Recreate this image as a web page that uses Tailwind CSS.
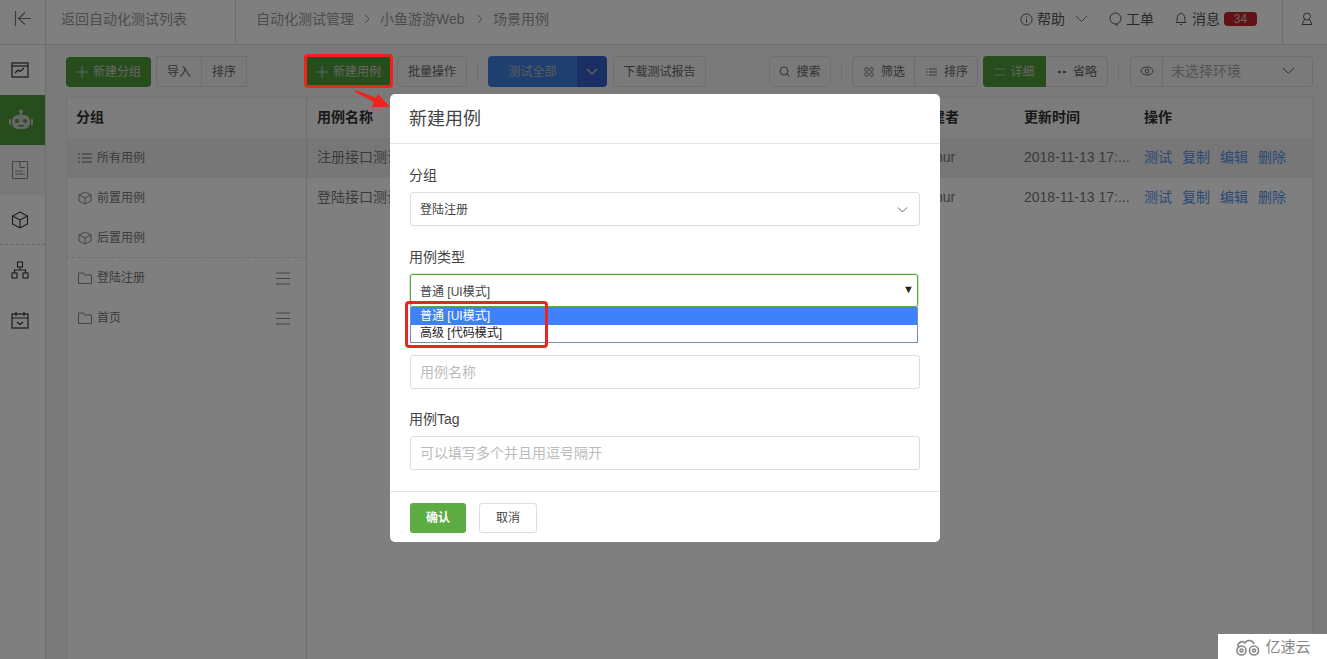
<!DOCTYPE html>
<html lang="zh-CN">
  <head>
    <meta charset="UTF-8" />
    <meta name="viewport" content="width=device-width, initial-scale=1.0" />
    <title>新建用例</title>
    <script src="https://cdn.jsdelivr.net/npm/@tailwindcss/browser@4"></script>
  </head>
  <body>
    <div class="relative flex h-screen flex-col overflow-hidden bg-white text-[#444] [font-family:'Liberation_Sans','Noto_Sans_CJK_SC',sans-serif]">
      <!-- top bar -->
      <header class="flex h-[45px] shrink-0 items-center border-b border-[#ddd] text-sm">
        <div class="flex h-full w-[46px] items-center justify-center border-r border-[#ddd] pb-[6px]">
          <svg class="h-5 w-5" viewBox="0 0 20 20" fill="none" stroke="#777" stroke-width="1.2"><path d="M2.500 2v15M18 9.500H6M12 3.500 5.500 9.500 12 15.500" /></svg>
        </div>
        <div class="flex h-full w-[190px] items-center border-r border-[#ddd] pb-[6px] pl-[15px] text-[#999]">返回自动化测试列表</div>
        <div class="flex h-full items-center pb-[6px] pl-5 text-[#999]">
          <span>自动化测试管理</span>
          <svg class="mx-[10px] h-[10px] w-[6px]" viewBox="0 0 6 10" fill="none" stroke="#999"><path d="M1 1l4 4-4 4" /></svg>
          <span class="w-[87px]">小鱼游游Web</span>
          <svg class="mx-[10px] h-[10px] w-[6px]" viewBox="0 0 6 10" fill="none" stroke="#999"><path d="M1 1l4 4-4 4" /></svg>
          <span>场景用例</span>
        </div>
        <div class="ml-auto flex h-full items-center pb-[6px] text-[#555]">
          <svg class="h-[13px] w-[13px]" viewBox="0 0 14 14" fill="none" stroke="#555"><circle cx="7" cy="7" r="6" /><path d="M7 6v4.500M7 3.500v1.200" /></svg>
          <span class="ml-[4px]">帮助</span>
          <svg class="ml-[10px] h-2 w-[13px]" viewBox="0 0 13 8" fill="none" stroke="#777"><path d="M1 1l5.500 5.500L12 1" /></svg>
          <svg class="ml-[21px] h-[14px] w-[13px]" viewBox="0 0 13 14" fill="none" stroke="#555"><circle cx="6.500" cy="6.500" r="5.500" /><path d="M6 12l3 1.500" /></svg>
          <span class="ml-[4px]">工单</span>
          <svg class="ml-[21px] h-[14px] w-3" viewBox="0 0 12 14" fill="none" stroke="#555"><path d="M1 10.500c1.200-1 1.200-2.500 1.200-4.500S3.500 1.500 6 1.500 9.800 4 9.800 6s0 3.500 1.200 4.500zM5 12.500h2" /></svg>
          <span class="ml-[5px]">消息</span>
          <span class="ml-[4px] flex h-[14px] w-[33px] items-center justify-center rounded-sm bg-[#c4242a] text-xs text-[#ccc]">34</span>
          <div class="-mb-[6px] ml-[25px] flex h-[45px] w-[45px] items-center justify-center border-l border-[#ddd] pb-[6px]">
            <svg class="ml-1 h-[14px] w-3" viewBox="0 0 12 14" fill="none" stroke="#555"><circle cx="6" cy="4.500" r="3.500" /><path d="M3.500 7.500 1 12.500h10L8.500 7.500" /></svg>
          </div>
        </div>
      </header>

      <div class="flex min-h-0 flex-1">
        <!-- sidebar -->
        <nav class="flex w-[46px] shrink-0 flex-col border-r border-[#ddd]">
          <div class="flex h-[50px] items-center justify-center pr-[6px]">
            <svg class="h-[18px] w-[18px]" viewBox="0 0 18 18" fill="none" stroke="#333" stroke-width="1.200"><rect x="1" y="2" width="16" height="14" /><path d="M1 5h16" /><path d="M4 12l3-3 2 1.500L13 7" /></svg>
          </div>
          <div class="flex h-[50px] items-center justify-center bg-[#4f9a38] pr-[4px]">
            <svg class="h-6 w-6" viewBox="0 0 24 24" fill="#ccc"><circle cx="12" cy="3.500" r="2" /><rect x="11" y="4" width="2" height="4" /><rect x="3" y="7" width="18" height="14" rx="6" /><rect x="0" y="11" width="2" height="6" rx="1" /><rect x="22" y="11" width="2" height="6" rx="1" /><circle cx="8" cy="13" r="2" fill="#4f9a38" /><circle cx="16" cy="13" r="2" fill="#4f9a38" /><rect x="9" y="17" width="6" height="1.500" fill="#4f9a38" /></svg>
          </div>
          <div class="flex h-[50px] items-center justify-center bg-[#f2f2f2] pr-[6px]">
            <svg class="h-[18px] w-4" viewBox="0 0 16 18" fill="none" stroke="#888"><path d="M.5.500h15v17H.5zM8 .5v6h5M3 10h8M3 13h10" /></svg>
          </div>
          <div class="flex h-[50px] items-center justify-center border-b border-dashed border-[#ccc] pr-[6px]">
            <svg class="h-[18px] w-[18px]" viewBox="0 0 18 18" fill="none" stroke="#333" stroke-width="1.100"><path d="M9 1l7.500 4v8L9 17l-7.500-4V5zM1.500 5 9 9l7.500-4M9 9v8" /></svg>
          </div>
          <div class="flex h-[50px] items-center justify-center pr-[6px]">
            <svg class="h-[18px] w-[18px]" viewBox="0 0 18 18" fill="none" stroke="#333" stroke-width="1.100"><rect x="6.500" y="1" width="5" height="5" /><rect x="1" y="12" width="5" height="5" /><rect x="12" y="12" width="5" height="5" /><path d="M9 6v3M3.500 12V9h11v3" /></svg>
          </div>
          <div class="flex h-[50px] items-center justify-center pr-[6px]">
            <svg class="h-[18px] w-[18px]" viewBox="0 0 18 18" fill="none" stroke="#333" stroke-width="1.200"><rect x="1" y="3" width="16" height="14" /><path d="M1 7h16M5 1v4M13 1v4M6 11l3 2.500 3-2.500" /></svg>
          </div>
        </nav>

        <main class="flex min-w-0 flex-1 flex-col bg-[#f4f4f4] pr-[14px] pl-5">
          <!-- toolbar -->
          <div class="mt-[11px] flex h-[31px] shrink-0 items-center text-xs text-[#666]">
            <button class="flex h-[30px] w-[85px] items-center justify-center gap-[5px] rounded-sm bg-[#4f9a38] text-[#ccc]">
              <svg class="h-3 w-3" viewBox="0 0 12 12" stroke="#ccc"><path d="M6 0v12M0 6h12" /></svg>新建分组
            </button>
            <div class="ml-[5px] flex h-[31px] border border-[#ddd]">
              <span class="flex w-[45px] items-center justify-center border-r border-[#ddd]">导入</span>
              <span class="flex w-[44px] items-center justify-center">排序</span>
            </div>
            <button class="ml-[60px] flex h-[30px] w-[83px] items-center justify-center gap-[5px] bg-[#4f9a38] text-[#ccc]">
              <svg class="h-3 w-3" viewBox="0 0 12 12" stroke="#ccc"><path d="M6 0v12M0 6h12" /></svg>新建用例
            </button>
            <span class="ml-[7px] flex h-[31px] w-[70px] items-center justify-center rounded-sm border border-[#ddd]">批量操作</span>
            <span class="ml-[10px] h-4 w-px bg-[#ddd]"></span>
            <div class="ml-[10px] flex h-[31px] text-[#bbb]">
              <span class="flex w-[89px] items-center justify-center rounded-l-sm bg-[#3f7ee0]">测试全部</span>
              <span class="flex w-[30px] items-center justify-center rounded-r-sm bg-[#3560c8]">
                <svg class="h-2 w-3" viewBox="0 0 12 8" fill="none" stroke="#bbb" stroke-width="1.500"><path d="M1 1l5 5 5-5" /></svg>
              </span>
            </div>
            <span class="ml-[6px] flex h-[31px] w-[93px] items-center justify-center rounded-sm border border-[#ddd]">下载测试报告</span>
            <span class="ml-[63px] flex h-[31px] w-[62px] items-center justify-center gap-[6px] rounded-sm border border-[#ddd]">
              <svg class="h-[11px] w-[11px]" viewBox="0 0 11 11" fill="none" stroke="#666"><circle cx="5" cy="5" r="4" /><path d="M8 8l2.500 2.500" /></svg>搜索
            </span>
            <span class="ml-[10px] h-4 w-px bg-[#ddd]"></span>
            <div class="ml-[10px] flex h-[31px] rounded-sm border border-[#ddd]">
              <span class="flex w-[62px] items-center justify-center gap-[7px] border-r border-[#ddd] pl-[2px]">
                <svg class="h-[10px] w-[10px]" viewBox="0 0 10 10" fill="none" stroke="#666" stroke-width=".8"><circle cx="2.500" cy="2.500" r="1.800" /><circle cx="7.500" cy="2.500" r="1.800" /><circle cx="2.500" cy="7.500" r="1.800" /><circle cx="7.500" cy="7.500" r="1.800" /></svg>筛选
              </span>
              <span class="flex w-[62px] items-center justify-center gap-[7px] pl-[2px]">
                <svg class="h-2 w-[11px]" viewBox="0 0 11 8" fill="none" stroke="#777"><path d="M0 1h1.500M3 1h8M0 4h1.500M3 4h8M0 7h1.500M3 7h8" /></svg>排序
              </span>
            </div>
            <div class="ml-[5px] flex h-[31px]">
              <span class="flex w-[63px] items-center justify-center gap-[5px] rounded-l-sm bg-[#4f9a38] text-[#ccc]">
                <svg class="h-2 w-[11px]" viewBox="0 0 11 8" fill="none" stroke="#bbb"><path d="M0 1h11M0 7h11" /></svg>详细
              </span>
              <span class="flex w-[62px] items-center justify-center gap-[7px] rounded-r-sm border border-l-0 border-[#ddd] pl-[2px]">
                <svg class="h-[2px] w-2" viewBox="0 0 8 2" fill="#666"><rect width="3" height="2" /><rect x="5" width="3" height="2" /></svg>省略
              </span>
            </div>
            <span class="ml-[10px] h-4 w-px bg-[#ddd]"></span>
            <div class="ml-[11px] flex h-[31px] w-[183px] items-center rounded-sm border border-[#ddd] pb-px text-sm text-[#aaa]">
              <span class="flex h-full w-[32px] items-center justify-center border-r border-[#ddd]">
                <svg class="h-[10px] w-[14px]" viewBox="0 0 14 10" fill="none" stroke="#666"><ellipse cx="7" cy="5" rx="6" ry="4" /><circle cx="7" cy="5" r="1.800" /></svg>
              </span>
              <span class="ml-2">未选择环境</span>
              <svg class="mr-[17px] ml-auto h-2 w-[13px]" viewBox="0 0 13 8" fill="none" stroke="#666"><path d="M1 1l5.500 5.500L12 1" /></svg>
            </div>
          </div>

          <!-- table -->
          <div class="mt-[10px] flex min-h-0 flex-1 border border-b-0 border-[#e8e8e8] bg-white text-sm">
            <section class="w-[240px] shrink-0 border-r border-[#ddd]">
              <div class="flex h-[40px] items-center bg-[#f8f8f8] pb-[2px] pl-[9px] font-bold text-[#333]">分组</div>
              <ul class="text-xs text-[#777]">
                <li class="flex h-[40px] items-center gap-[5px] bg-[#eee] pl-[11px]">
                  <svg class="h-3 w-[14px]" viewBox="0 0 14 12" fill="none" stroke="#666"><path d="M0 2h2M4 2h10M0 6h2M4 6h10M0 10h2M4 10h10" /></svg>所有用例
                </li>
                <li class="flex h-[40px] items-center gap-[5px] pl-[11px]">
                  <svg class="h-[14px] w-[14px]" viewBox="0 0 14 14" fill="none" stroke="#888"><path d="M7 1l6 3v6l-6 3-6-3V4zM1 4l6 3 6-3M7 7v6" /></svg>前置用例
                </li>
                <li class="flex h-[40px] items-center gap-[5px] border-b border-dashed border-[#ddd] pl-[11px]">
                  <svg class="h-[14px] w-[14px]" viewBox="0 0 14 14" fill="none" stroke="#888"><path d="M7 1l6 3v6l-6 3-6-3V4zM1 4l6 3 6-3M7 7v6" /></svg>后置用例
                </li>
                <li class="flex h-[40px] items-center gap-[5px] pl-[11px]">
                  <svg class="h-3 w-[14px]" viewBox="0 0 14 12" fill="none" stroke="#888"><path d="M.5 1h5l1 2h7v8.500H.5z" /></svg>登陆注册
                  <svg class="mr-[16px] ml-auto h-[13px] w-[14px]" viewBox="0 0 14 13" fill="none" stroke="#888"><path d="M0 1h14M0 6.500h14M0 12h14" /></svg>
                </li>
                <li class="flex h-[40px] items-center gap-[5px] pl-[11px]">
                  <svg class="h-3 w-[14px]" viewBox="0 0 14 12" fill="none" stroke="#888"><path d="M.5 1h5l1 2h7v8.500H.5z" /></svg>首页
                  <svg class="mr-[16px] ml-auto h-[13px] w-[14px]" viewBox="0 0 14 13" fill="none" stroke="#888"><path d="M0 1h14M0 6.500h14M0 12h14" /></svg>
                </li>
              </ul>
            </section>
            <section class="min-w-0 flex-1">
              <div class="flex h-[40px] items-center bg-[#f8f8f8] pb-[2px] pl-[10px] font-bold text-[#333]">
                <span class="w-[600px]">用例名称</span>
                <span class="w-[107px]">创建者</span>
                <span class="w-[120px]">更新时间</span>
                <span>操作</span>
              </div>
              <div class="flex h-[40px] items-center bg-[#eee] pb-[2px] pl-[10px] text-[#777]">
                <span class="w-[600px]">注册接口测试</span>
                <span class="w-[107px]">Arthur</span>
                <span class="w-[120px] whitespace-nowrap">2018-11-13 17:...</span>
                <span class="flex gap-[10px] text-[#5793e8]"><a>测试</a><a>复制</a><a>编辑</a><a>删除</a></span>
              </div>
              <div class="flex h-[40px] items-center pb-[2px] pl-[10px] text-[#777]">
                <span class="w-[600px]">登陆接口测试</span>
                <span class="w-[107px]">Arthur</span>
                <span class="w-[120px] whitespace-nowrap">2018-11-13 17:...</span>
                <span class="flex gap-[10px] text-[#5793e8]"><a>测试</a><a>复制</a><a>编辑</a><a>删除</a></span>
              </div>
            </section>
          </div>
        </main>
      </div>

      <!-- backdrop -->
      <div class="absolute inset-0 bg-black/50"></div>

      <!-- annotations from the screenshot -->
      <div class="absolute top-[54px] left-[304px] h-[34px] w-[89px] rounded-sm border-[3px] border-[#f0231a]"></div>
      <svg class="absolute top-[88px] left-[352px] h-[22px] w-[40px]" viewBox="0 0 40 22" fill="#f0231a"><path d="M4 2 L24 10 L26 6 L38 19 L20 19 L22 14 L3 4z" /></svg>

      <!-- dialog -->
      <div class="absolute top-[94px] left-[390px] w-[550px] rounded-[5px] bg-white">
        <div class="flex h-[50px] items-center border-b border-[#e5e5e5] pl-[19px] text-lg text-[#444]">新建用例</div>
        <div class="px-5 pt-[21px] text-sm text-[#444]">
          <label class="-ml-px block h-[20px] leading-5">分组</label>
          <div class="mt-[7px] flex h-[34px] items-center rounded-[3px] border border-[#ddd] pt-[2px] pl-[9px] text-xs">
            登陆注册
            <svg class="mr-[11px] ml-auto h-2 w-[11px]" viewBox="0 0 11 8" fill="none" stroke="#666"><path d="M1 1.500l4.500 4.500L10 1.500" /></svg>
          </div>

          <label class="mt-[21px] -ml-px block h-[20px] leading-5">用例类型</label>
          <div class="mt-[7px] flex h-[33px] w-[508px] items-center rounded-[3px] border border-[#5aa843] pt-[2px] pl-[9px] text-xs shadow-[0_0_0_1px_#d3e8cc]">
            普通 [UI模式]
            <span class="mr-[3px] ml-auto pb-1 text-[11px] text-[#222]">▼</span>
          </div>
          <ul class="h-[36px] w-[508px] border border-t-0 border-[#7d8db3] text-xs">
            <li class="h-[18px] bg-[#3f80fb] pl-[9px] leading-[19px] text-white">普通 [UI模式]</li>
            <li class="h-[17px] pl-[9px] leading-[17px] text-[#222]">高级 [代码模式]</li>
          </ul>

          <input class="mt-[12px] block h-[34px] w-full rounded-[3px] border border-[#ddd] pl-[9px] placeholder:text-[#bbb]" placeholder="用例名称" />

          <label class="mt-[20px] -ml-px block h-[20px] leading-5">用例Tag</label>
          <input class="mt-[7px] block h-[34px] w-full rounded-[3px] border border-[#ddd] pl-[9px] placeholder:text-[#bbb]" placeholder="可以填写多个并且用逗号隔开" />
        </div>
        <div class="mt-[21px] flex h-[51px] items-center gap-[13px] border-t border-[#e5e5e5] px-5 pt-[1px] text-xs">
          <button class="h-[30px] w-[56px] rounded-[3px] bg-[#5cab43] font-bold text-white">确认</button>
          <button class="h-[30px] w-[58px] rounded-[3px] border border-[#ddd] text-[#444]">取消</button>
        </div>
      </div>

      <div class="absolute top-[301px] left-[405px] h-[47px] w-[143px] rounded-sm border-[3px] border-[#e8261f]"></div>

      <!-- watermark -->
      <div class="absolute right-0 bottom-0 flex h-[25px] w-[109px] items-center justify-center gap-[3px] bg-white pt-px text-[15px] text-[#888]">
        <svg class="h-[17px] w-[28px]" viewBox="0 0 28 17" fill="none" stroke="#888" stroke-width="1.600"><path d="M5 9C2 4 8 1 11 4c2-4 8-3 9 1" /><circle cx="7.500" cy="11.500" r="4.500" /><circle cx="7.500" cy="11.500" r="1.500" /><circle cx="20" cy="11.500" r="4.500" /><circle cx="20" cy="11.500" r="1.500" /></svg>
        亿速云
      </div>
    </div>
  </body>
</html>
